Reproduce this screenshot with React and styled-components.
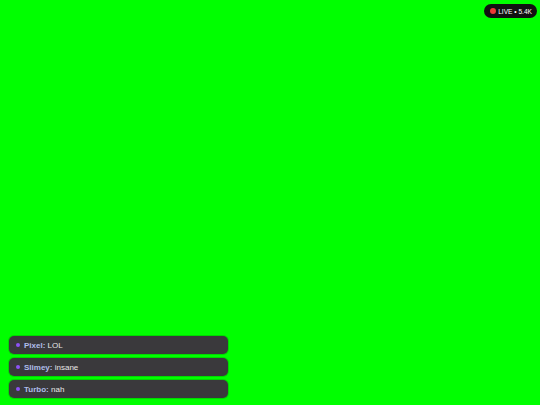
import React from 'react';
import styled, { createGlobalStyle } from 'styled-components';

const GlobalStyle = createGlobalStyle`
   html, body { margin: 0; padding: 0; }
   body {
      background: #00ff00;
      font-family: "Liberation Sans", Arial, sans-serif;
   }
`;

const Screen = styled.div`
   position: relative;
   width: 540px;
   height: 405px;
   overflow: hidden;
   background: #00ff00;
   display: flex;
   flex-direction: column;
   justify-content: flex-end;
   padding: 0 0 7px 9px;
   box-sizing: border-box;
`;

const LiveBadge = styled.div`
   position: absolute;
   top: 4px;
   right: 3px;
   height: 14px;
   padding: 0 5px 0 6px;
   border-radius: 7px;
   background: #111;
   display: flex;
   align-items: center;
   gap: 2px;
   color: #fff;
   font-size: 6.6px;
`;

const RedDot = styled.span`
   width: 6px;
   height: 6px;
   border-radius: 50%;
   background: #ef3b36;
`;

const Chat = styled.div`
   display: flex;
   flex-direction: column;
   gap: 4px;
   width: 219px;
`;

const Message = styled.div`
   height: 18px;
   border-radius: 5px;
   background: #3a393c;
   box-shadow: 0 0 0 1px rgba(0, 0, 0, 0.15);
   display: flex;
   align-items: center;
   padding-left: 7px;
   font-size: 8px;
   color: #e6e6e6;
`;

const Dot = styled.span`
   width: 4px;
   height: 4px;
   border-radius: 50%;
   background: #8d52f5;
   margin-right: 4px;
`;

const Name = styled.span`
   font-weight: 700;
   color: #aebde9;
`;

const messages = [
   { user: 'Pixel', text: 'LOL' },
   { user: 'Slimey', text: 'insane' },
   { user: 'Turbo', text: 'nah' },
];

const App = () => (
   <>
      <GlobalStyle />
      <Screen>
         <LiveBadge>
            <RedDot />
            LIVE • 5.4K
         </LiveBadge>
         <Chat>
            {messages.map((m) => (
               <Message key={m.user}>
                  <Dot />
                  <Name>{m.user}:</Name>&nbsp;{m.text}
               </Message>
            ))}
         </Chat>
      </Screen>
   </>
);

export default App;
